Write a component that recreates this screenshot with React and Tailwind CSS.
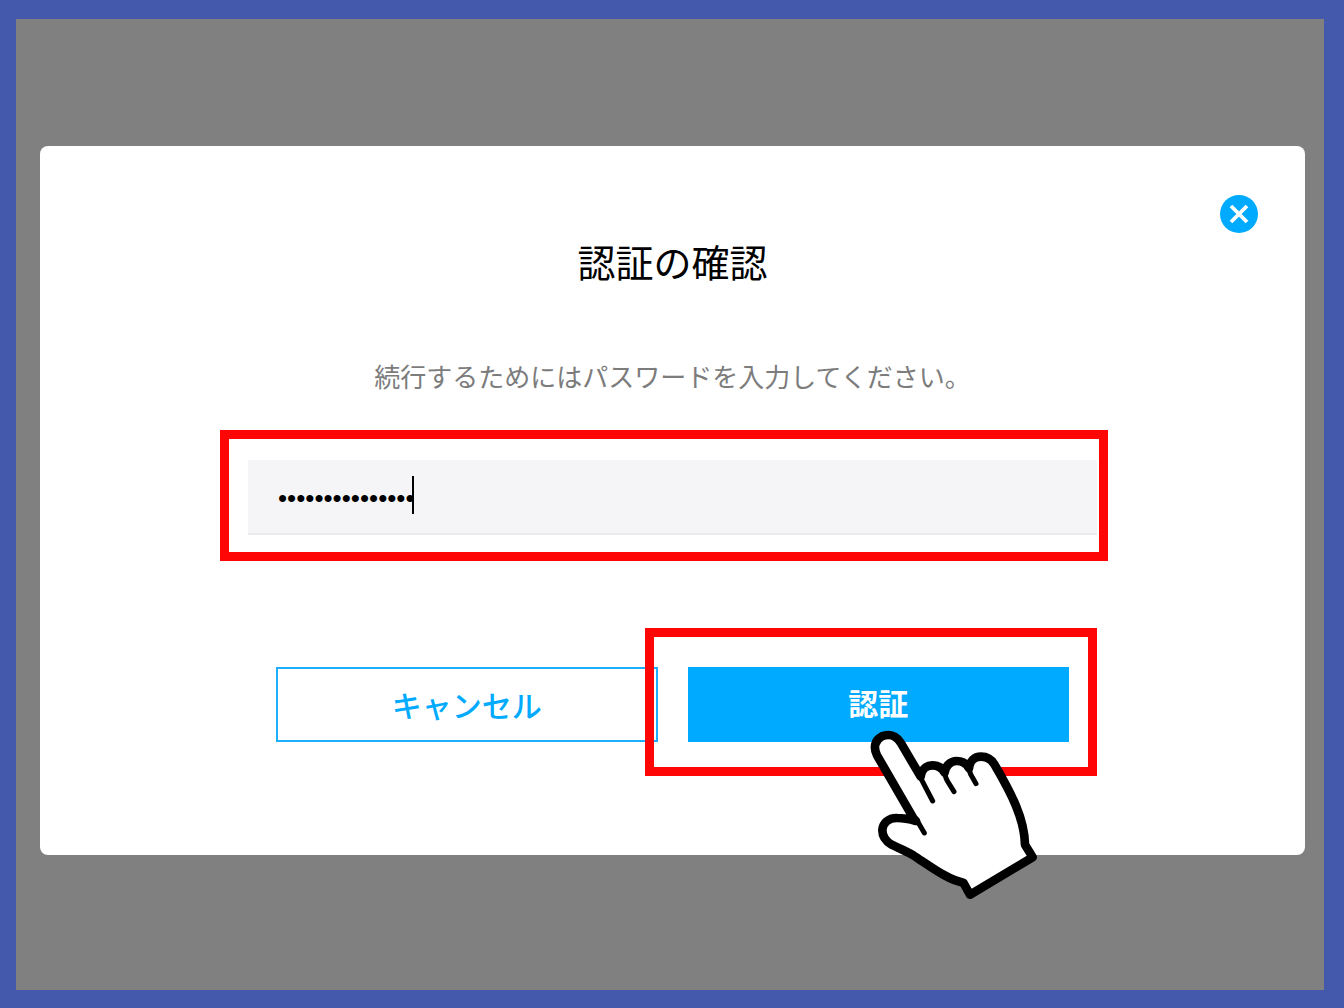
import React from "react";

function PointingHand({ className }) {
  return (
    <svg className={className} viewBox="0 0 570 570" fill="none" stroke="#000" strokeLinecap="round" strokeLinejoin="round" aria-hidden="true">
      <path
        d="M161 296 L51 106 C39 82 45 59 66 49 C87 40 109 47 122 68 L182 170 C184 150 198 136 217 136 C234 136 246 143 254 158 C256 138 271 123 290 123 C307 123 319 130 327 145 C329 124 343 110 363 110 C381 110 394 118 403 133 C455 222 493 295 495 374 L518 412 L330 524 L310 488 C265 480 215 442 160 406 C136 391 114 384 95 374 C76 363 67 348 67 330 C68 309 86 293 112 294 C133 294 150 298 168 303 Z"
        fill="#fff"
        strokeWidth="26"
      />
      <path d="M183 176 L218 243 M254 150 C252 166 258 176 264 186 L282 215 M327 138 C325 152 332 163 337 172 L348 191 M172 303 L193 339" strokeWidth="15" />
    </svg>
  );
}

function CloseIcon() {
  return (
    <svg className="size-full" viewBox="0 0 38 38" fill="none" stroke="#fff" strokeWidth="3.8" aria-hidden="true">
      <path d="M11 11 L27 27 M27 11 L11 27" />
    </svg>
  );
}

export default function App() {
  return (
    <div className="flex min-h-screen flex-col bg-[#4459ab] pt-[19px] pr-5 pb-[18px] pl-4 font-['Noto_Sans_CJK_JP',sans-serif]">
      <main className="flex flex-1 flex-col bg-[#808080] pt-[127px] pr-[19px] pb-[135px] pl-6">
        <section role="dialog" aria-labelledby="dialog-title" className="flex-1 rounded-lg bg-white pb-28">
          <div className="flex justify-end pt-[49px] pr-[47px]">
            <button type="button" aria-label="閉じる" className="size-[38px] rounded-full bg-[#00aaff]">
              <CloseIcon />
            </button>
          </div>

          <h1 id="dialog-title" className="text-center text-[38px] leading-[56px] text-black">
            認証の確認
          </h1>
          <label htmlFor="password" className="mt-[67px] block text-center text-[26px] leading-10 text-[#7c7c7c]">
            続行するためにはパスワードを入力してください。
          </label>

          <div className="mt-16 px-52">
            <div className="relative">
              <input
                id="password"
                type="password"
                defaultValue="passwordpasswor"
                className="block h-[75px] w-full border-b-2 border-[#ebebeb] bg-[#f5f5f8] px-[30px] pt-1 font-['Liberation_Sans',sans-serif] text-[26px] text-black outline-none"
              />
              <span className="absolute top-4 left-[164px] h-[38px] w-0.5 bg-black" />
              <span className="pointer-events-none absolute -top-[30px] -right-[11px] -bottom-[26px] -left-7 border-[9px] border-[#ff0606]" />
            </div>
          </div>

          <div className="mt-[132px] grid grid-cols-2 gap-[30px] px-[236px]">
            <button type="button" className="h-[75px] border-2 border-[#1cb0fc] bg-white text-[30px] font-medium text-[#00aaff]">
              キャンセル
            </button>
            <div className="relative">
              <button type="button" className="block h-[75px] w-full bg-[#00aaff] pb-1 text-[30px] font-bold text-white">
                認証
              </button>
              <span className="pointer-events-none absolute -top-[39px] -right-7 -bottom-[34px] -left-[43px] border-[9px] border-[#ff0606]" />
              <PointingHand className="pointer-events-none absolute top-[53px] left-[172px] size-[190px]" />
            </div>
          </div>
        </section>
      </main>
    </div>
  );
}
